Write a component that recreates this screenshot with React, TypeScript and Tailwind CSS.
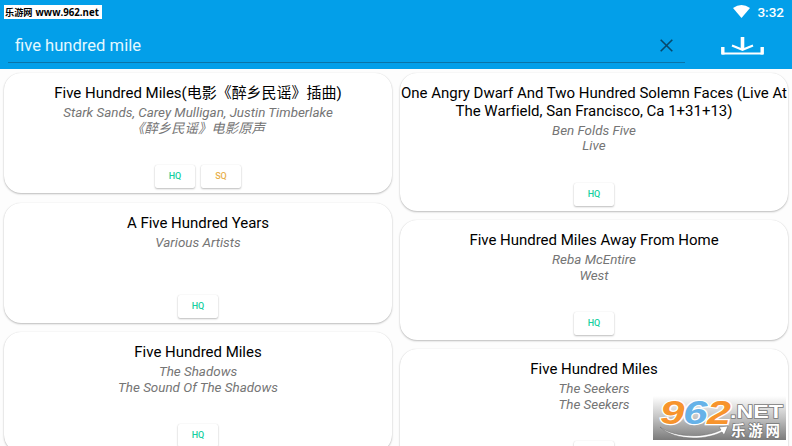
type Song = { title: string[]; lines: string[]; badges: ("HQ" | "SQ")[] };

const left: Song[] = [
  {
    title: ["Five Hundred Miles(电影《醉乡民谣》插曲)"],
    lines: ["Stark Sands, Carey Mulligan, Justin Timberlake", "《醉乡民谣》电影原声"],
    badges: ["HQ", "SQ"],
  },
  { title: ["A Five Hundred Years"], lines: ["Various Artists"], badges: ["HQ"] },
  { title: ["Five Hundred Miles"], lines: ["The Shadows", "The Sound Of The Shadows"], badges: ["HQ"] },
];

const right: Song[] = [
  {
    title: ["One Angry Dwarf And Two Hundred Solemn Faces (Live At", "The Warfield, San Francisco, Ca 1+31+13)"],
    lines: ["Ben Folds Five", "Live"],
    badges: ["HQ"],
  },
  { title: ["Five Hundred Miles Away From Home"], lines: ["Reba McEntire", "West"], badges: ["HQ"] },
  { title: ["Five Hundred Miles"], lines: ["The Seekers", "The Seekers"], badges: ["HQ"] },
];

function Card({ song }: { song: Song }) {
  return (
    <article className="flex shrink-0 flex-col items-center rounded-[17px] bg-white pt-[12px] pb-[5px] shadow-[0_1px_2px_rgba(0,0,0,0.25),0_0_1px_rgba(0,0,0,0.12)]">
      <h2 className="text-center text-[15px] leading-[17.6px] tracking-[-0.02px] whitespace-nowrap text-black">
        {song.title.map((t) => (
          <span key={t} className="block h-[17.6px]">{t}</span>
        ))}
      </h2>
      <div className="mt-[2.6px] h-[60px] text-center text-[13.4px] leading-[15.6px] whitespace-nowrap text-[#757575] italic">
        {song.lines.map((l, i) => (
          <p key={i} className="h-[15.6px]">{l}</p>
        ))}
      </div>
      <div className="flex gap-[6px]">
        {song.badges.map((b) => (
          <button
            key={b}
            className={`h-[23px] w-[40px] rounded-[2px] bg-white text-[9px] leading-[23px] font-medium shadow-[0_1px_2px_rgba(0,0,0,0.25),0_0_1px_rgba(0,0,0,0.12)] ${b === "HQ" ? "text-[#16d0a0]" : "text-[#e8b04c]"}`}
          >
            {b}
          </button>
        ))}
      </div>
    </article>
  );
}

function Watermark() {
  return (
    <svg className="absolute top-[396px] left-[653px]" width="133" height="44" viewBox="0 0 133 44">
      <defs>
        <linearGradient id="fade" x1="0" y1="0" x2="0" y2="1">
          <stop offset="0" stopColor="#fff" />
          <stop offset="0.5" stopColor="#c2c2c2" />
          <stop offset="1" stopColor="#7b7b7b" />
        </linearGradient>
      </defs>
      <rect width="133" height="44" fill="url(#fade)" />
      <g fontFamily="'Liberation Sans', sans-serif" fontWeight="700" fontStyle="italic" fontSize="34" stroke="#fff" strokeWidth="2.4" paintOrder="stroke">
        <text x="7" y="28" fill="#f7942d" textLength="24.5" lengthAdjust="spacingAndGlyphs">9</text>
        <text x="30" y="28" fill="#66b2e8" textLength="24.5" lengthAdjust="spacingAndGlyphs">6</text>
        <text x="54" y="28" fill="#f7942d" textLength="24" lengthAdjust="spacingAndGlyphs">2</text>
      </g>
      <path d="M7 31 C20 41 50 43 68 34 L66 31 L75 30 L71 39 L69 36 C49 46 19 43 7 31Z" fill="#fff" stroke="#666" strokeWidth="0.5" />
      <g fill="#fff" stroke="#777" strokeWidth="1.4" paintOrder="stroke" fontWeight="700">
        <text x="77" y="21.5" fontFamily="'Liberation Sans', sans-serif" fontSize="19" textLength="53" lengthAdjust="spacingAndGlyphs">.NET</text>
        <text x="78" y="39.5" fontFamily="'Noto Sans CJK SC', sans-serif" fontSize="14.5" textLength="49">乐游网</text>
      </g>
    </svg>
  );
}

export default function App() {
  return (
    <div className="relative flex h-[446px] w-[792px] flex-col overflow-hidden bg-[#fdfdfd] font-['Roboto','Noto_Sans_CJK_SC',sans-serif]">
      <header className="flex h-[69px] shrink-0 flex-col bg-[#039fe9]">
        <div className="flex h-[24px] items-start justify-between">
          <div className="mt-[5px] ml-[4px] flex h-[14px] w-[98px] items-center gap-[3px] bg-white pl-[1px] whitespace-nowrap text-black">
            <span className="font-['Noto_Sans_CJK_SC',sans-serif] text-[9.2px] leading-[14px] font-bold">乐游网</span>
            <span className="pt-[1px] font-['Open_Sans',sans-serif] text-[9.7px] leading-[14px] font-bold">www.962.net</span>
          </div>
          <div className="mt-[4px] mr-[8px] flex items-start gap-[7px] text-white">
            <svg className="mt-[1px]" width="17" height="13" viewBox="0 0 17 13">
              <path d="M0 3Q8.5-2.8 17 3L8.5 13Z" fill="currentColor" />
            </svg>
            <span className="text-[13.5px] leading-[16px] font-medium">3:32</span>
          </div>
        </div>
        <div className="flex h-[45px]">
          <div className="ml-[8px] flex h-[39px] w-[677px] items-center justify-between border-b border-[#0b74a8] pr-[12px] pb-[1px] pl-[7px]">
            <span className="pt-[7px] text-[16.6px] leading-[20px] text-[#e2f8ff]">five hundred mile</span>
            <svg className="mt-[5px]" width="13" height="13" viewBox="0 0 13 13" fill="none" stroke="#07486b" strokeWidth="1.6">
              <path d="M.7.7l11.6 11.6M12.3.7L.7 12.3" />
            </svg>
          </div>
          <svg className="mt-[13px] ml-[36px]" width="43" height="18" viewBox="0 0 43 18" fill="none" stroke="#fff">
            <path d="M1 16.5H42" strokeWidth="2" />
            <path d="M1.8 10V17.5M41.2 10V17.5" strokeWidth="3.4" />
            <path d="M21.5 0V12.5" strokeWidth="3.6" />
            <path d="M11 8.5L21.5 12.7L32 8.5" strokeWidth="2.2" />
          </svg>
        </div>
      </header>
      <main className="grid min-h-0 flex-1 grid-cols-2 gap-[8px] overflow-hidden px-[4px] pt-[4px]">
        <div className="flex flex-col gap-[9.3px] pt-[0.2px]">
          {left.map((s, i) => <Card key={i} song={s} />)}
        </div>
        <div className="flex flex-col gap-[9px]">
          {right.map((s, i) => <Card key={i} song={s} />)}
        </div>
      </main>
      <Watermark />
    </div>
  );
}
